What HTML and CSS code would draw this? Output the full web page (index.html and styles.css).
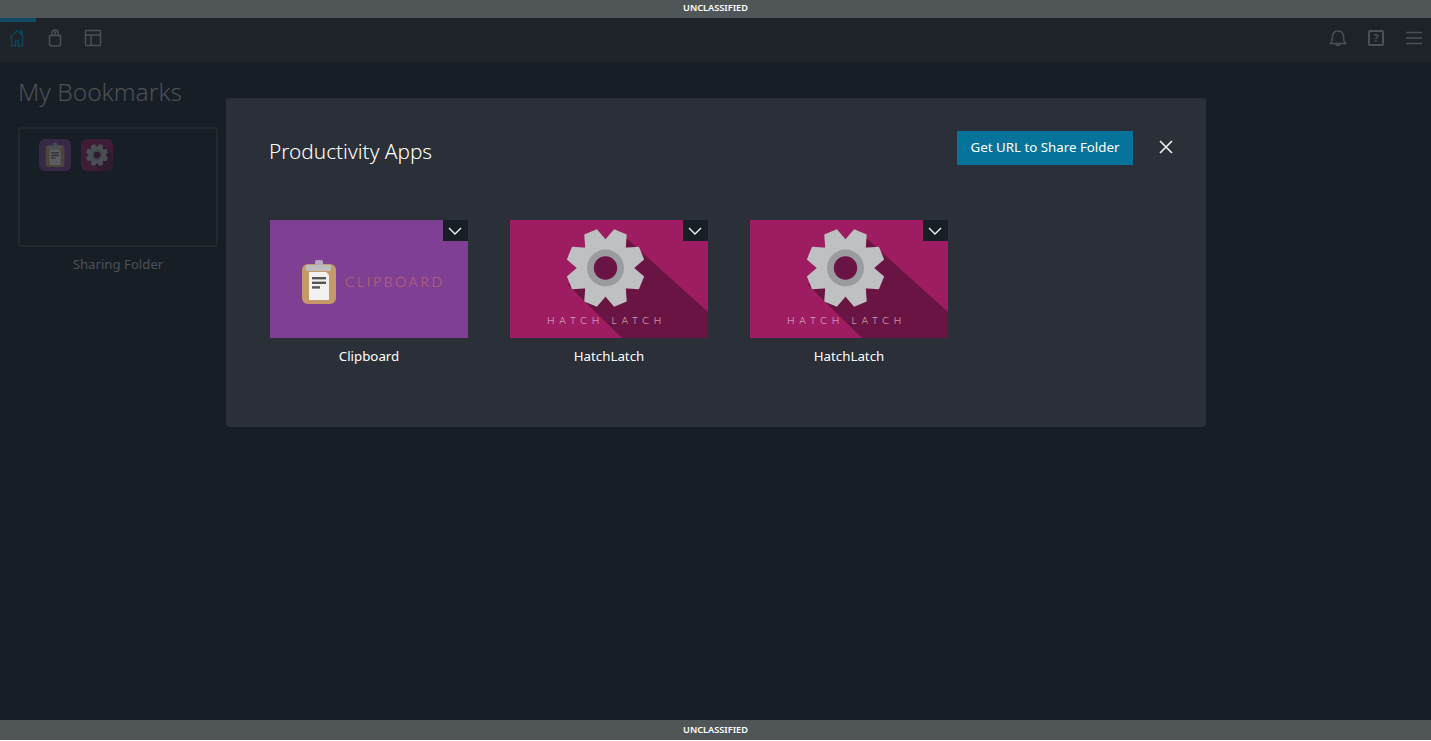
FILE: index.html
```html
<!DOCTYPE html>
<html lang="en">
<head>
    <meta charset="UTF-8">
    <meta name="viewport" content="width=device-width, initial-scale=1.0">
    <title>My Bookmarks</title>
    <link rel="stylesheet" href="styles.css">
</head>
<body>
    <!-- shared artwork for the app tiles -->
    <svg class="sprite" aria-hidden="true">
        <symbol id="gear" viewBox="-40 -40 80 80">
            <g fill="#bfc0c2">
                <circle r="29"/>
                <polygon id="tooth" points="-12,-25 -7,-40 7,-40 12,-25" transform="rotate(22.5)"/>
                <use href="#tooth" transform="rotate(45)"/>
                <use href="#tooth" transform="rotate(90)"/>
                <use href="#tooth" transform="rotate(135)"/>
                <use href="#tooth" transform="rotate(180)"/>
                <use href="#tooth" transform="rotate(225)"/>
                <use href="#tooth" transform="rotate(270)"/>
                <use href="#tooth" transform="rotate(315)"/>
            </g>
            <circle r="19" fill="#9b9c9f"/>
            <circle r="12" fill="#6a1444"/>
        </symbol>
        <symbol id="clipboard" viewBox="0 0 36 44">
            <rect x="1" y="4" width="34" height="40" rx="6" fill="#c49a68"/>
            <rect x="14" y="0" width="8" height="6" rx="2" fill="#b7a9bd"/>
            <rect x="5" y="5" width="25" height="6" rx="1" fill="#bdbdbd"/>
            <polygon points="8,12 25,12 28,15 28,40 8,40" fill="#f2f2f2"/>
            <rect x="11" y="17" width="14" height="2.4" fill="#555"/>
            <rect x="11" y="21.6" width="14" height="2.4" fill="#555"/>
            <rect x="11" y="26.2" width="8" height="2.4" fill="#555"/>
        </symbol>
    </svg>

    <div class="app">
        <div class="banner banner-top">UNCLASSIFIED</div>

        <nav class="nav">
            <div class="nav-group">
                <a class="nav-item active">
                    <svg class="icon" viewBox="0 0 16 18"><path d="M1 8.500 8 1.500l7 7M2.500 7.500V17h4v-5.500h3V17h4V7.500M11.500 4.500V2h1.500v4"/></svg>
                </a>
                <a class="nav-item">
                    <svg class="icon" viewBox="0 0 16 18"><path d="M2.500 6.500h11V15a2 2 0 0 1-2 2h-7a2 2 0 0 1-2-2zM5 6.500V3.500a3 2.500 0 0 1 6 0v3M8 2v4.500"/></svg>
                </a>
                <a class="nav-item">
                    <svg class="icon" viewBox="0 0 18 18"><path d="M2.500 1.500h13a1 1 0 0 1 1 1v13a1 1 0 0 1-1 1h-13a1 1 0 0 1-1-1v-13a1 1 0 0 1 1-1zM1.500 6h15M7 6v10.500"/></svg>
                </a>
            </div>
            <div class="nav-group nav-right">
                <a class="nav-item">
                    <svg class="icon" viewBox="0 0 18 18"><path d="M1.500 14.500c1.500-1.500 2-3 2-6.500 0-3.500 2-6 5.500-6s5.500 2.500 5.500 6c0 3.500.5 5 2 6.500zM7 14.500a2 2 0 0 0 4 0"/></svg>
                </a>
                <a class="nav-item">
                    <span class="help-box">?</span>
                </a>
                <a class="nav-item">
                    <svg class="icon" viewBox="0 0 18 14"><path d="M1 1.500h16M1 7h16M1 12.500h16"/></svg>
                </a>
            </div>
        </nav>

        <main class="content">
            <h1 class="page-title">My Bookmarks</h1>
            <div class="folder">
                <div class="folder-box">
                    <span class="mini mini-purple">
                        <svg viewBox="0 0 36 44" class="mini-clip"><use href="#clipboard"/></svg>
                    </span>
                    <span class="mini mini-pink">
                        <svg viewBox="0 0 32 32">
                            <polygon points="22,6 32,16 32,32 20,32 8,22" fill="#6a1444"/>
                            <svg x="5" y="5" width="22" height="22"><use href="#gear"/></svg>
                        </svg>
                    </span>
                </div>
                <div class="folder-name">Sharing Folder</div>
            </div>

            <section class="modal">
                <header class="modal-head">
                    <h2 class="modal-title">Productivity Apps</h2>
                    <button class="share-btn">Get URL to Share Folder</button>
                    <button class="close-btn" aria-label="Close">
                        <svg viewBox="0 0 14 14"><path d="M1 1l12 12M13 1L1 13"/></svg>
                    </button>
                </header>
                <div class="tiles">
                    <div class="tile">
                        <div class="tile-art art-clipboard">
                            <svg viewBox="0 0 198 118">
                                <svg x="31" y="40" width="36" height="44"><use href="#clipboard"/></svg>
                                <text x="75" y="67" class="art-text clip-text">CLIPBOARD</text>
                            </svg>
                            <span class="tile-menu"><svg viewBox="0 0 14 8"><path d="M1 1l6 6 6-6"/></svg></span>
                        </div>
                        <div class="tile-name">Clipboard</div>
                    </div>
                    <div class="tile">
                        <div class="tile-art art-hatch">
                            <svg viewBox="0 0 198 118">
                                <polygon points="115,17 198,92 198,118 112,118 58,65" fill="#6a1444"/>
                                <svg x="56" y="9" width="79" height="78"><use href="#gear"/></svg>
                                <text x="37" y="104" class="art-text hatch-text">HATCH LATCH</text>
                            </svg>
                            <span class="tile-menu"><svg viewBox="0 0 14 8"><path d="M1 1l6 6 6-6"/></svg></span>
                        </div>
                        <div class="tile-name">HatchLatch</div>
                    </div>
                    <div class="tile">
                        <div class="tile-art art-hatch">
                            <svg viewBox="0 0 198 118">
                                <polygon points="115,17 198,92 198,118 112,118 58,65" fill="#6a1444"/>
                                <svg x="56" y="9" width="79" height="78"><use href="#gear"/></svg>
                                <text x="37" y="104" class="art-text hatch-text">HATCH LATCH</text>
                            </svg>
                            <span class="tile-menu"><svg viewBox="0 0 14 8"><path d="M1 1l6 6 6-6"/></svg></span>
                        </div>
                        <div class="tile-name">HatchLatch</div>
                    </div>
                </div>
            </section>
        </main>

        <div class="banner banner-bottom">UNCLASSIFIED</div>
    </div>
</body>
</html>
```

FILE: styles.css
```css
body {
    font-family: "Noto Sans", "Open Sans", sans-serif;
    background-color: #fff;
    margin: 0;
}
.sprite {
    position: absolute;
    width: 0;
    height: 0;
}
.app {
    height: 740px;
    display: flex;
    flex-direction: column;
    background-color: #181e25;
}
.banner {
    background-color: #505558;
    color: #fff;
    font-size: 9.200px;
    font-weight: 600;
    text-align: center;
}
.banner-top {
    height: 18px;
    line-height: 15px;
}
.banner-bottom {
    height: 20px;
    line-height: 20px;
}
.nav {
    height: 44px;
    display: flex;
    justify-content: space-between;
    background-color: #1e2329;
}
.nav-group {
    display: flex;
    gap: 2px;
}
.nav-item {
    width: 34px;
    height: 32px;
    padding-right: 2px;
    display: flex;
    align-items: center;
    justify-content: center;
    color: #4b5055;
    border-top: 4px solid transparent;
}
.nav-right .nav-item {
    padding-right: 0;
    padding-left: 2px;
}
.nav-item.active {
    color: #0e4459;
    border-top-color: #124a63;
}
.icon {
    width: 18px;
    height: 18px;
    fill: none;
    stroke: currentColor;
    stroke-width: 1.500;
}
.help-box {
    width: 12px;
    height: 12px;
    border: 2px solid #4b5055;
    border-radius: 2px;
    font-size: 11px;
    font-weight: 700;
    line-height: 12px;
    text-align: center;
}
.content {
    flex: 1;
    position: relative;
    padding: 14px 18px;
}
.page-title {
    margin: 0 0 19px;
    color: #4c5156;
    font-size: 24.500px;
    font-weight: 300;
    line-height: 32px;
}
.folder {
    width: 200px;
}
.folder-box {
    box-sizing: border-box;
    height: 120px;
    padding: 10px 19px;
    display: flex;
    gap: 10px;
    border: 2px solid #22282e;
    border-radius: 4px;
}
.mini {
    width: 32px;
    height: 32px;
    border-radius: 6px;
    overflow: hidden;
    display: flex;
    align-items: center;
    justify-content: center;
    opacity: .3;
}
.mini-purple {
    background-color: #7f3f93;
}
.mini-pink {
    background-color: #9e1d62;
}
.mini-clip {
    width: 20px;
    height: 26px;
}
.folder-name {
    margin-top: 8px;
    color: #4c5156;
    font-size: 13.200px;
    line-height: 18px;
    text-align: center;
}
.modal {
    position: absolute;
    top: 36px;
    left: 226px;
    width: 980px;
    height: 329px;
    box-sizing: border-box;
    padding: 33px 33px 0 43px;
    background-color: #2b2f37;
    border-radius: 3px;
}
.modal-head {
    display: flex;
    align-items: center;
}
.modal-title {
    flex: 1;
    margin: 6px 0 0;
    color: #fff;
    font-size: 20.800px;
    font-weight: 300;
}
.share-btn {
    width: 176px;
    height: 34px;
    padding: 0 0 2px;
    border: none;
    background-color: #06739b;
    color: #fff;
    font-family: inherit;
    font-size: 13.300px;
}
.close-btn {
    width: 14px;
    height: 14px;
    margin: 0 0 2px 26px;
    padding: 0;
    border: none;
    background: none;
}
.close-btn svg {
    display: block;
    fill: none;
    stroke: #f2f2f2;
    stroke-width: 1.600;
}
.tiles {
    display: flex;
    gap: 42px;
    margin: 55px 0 0 1px;
}
.tile {
    width: 198px;
}
.tile-art {
    position: relative;
    height: 118px;
}
.tile-art > svg {
    display: block;
    width: 198px;
    height: 118px;
}
.art-clipboard {
    background-color: #7f3f93;
}
.art-hatch {
    background-color: #9e1d62;
}
.art-text {
    font-family: Lato, sans-serif;
    font-weight: 300;
}
.clip-text {
    fill: #c26c72;
    font-size: 14px;
    letter-spacing: 2.600px;
}
.hatch-text {
    fill: #e6c4d6;
    font-size: 10px;
    letter-spacing: 4.800px;
}
.tile-menu {
    position: absolute;
    top: 0;
    right: 0;
    width: 24px;
    height: 21px;
    padding-right: 1px;
    display: flex;
    align-items: center;
    justify-content: center;
    background-color: #181e25;
}
.tile-menu svg {
    width: 14px;
    height: 8px;
    fill: none;
    stroke: #f2f2f2;
    stroke-width: 1.400;
}
.tile-name {
    margin-top: 9px;
    color: #fff;
    font-size: 13.300px;
    line-height: 18px;
    text-align: center;
}
```
